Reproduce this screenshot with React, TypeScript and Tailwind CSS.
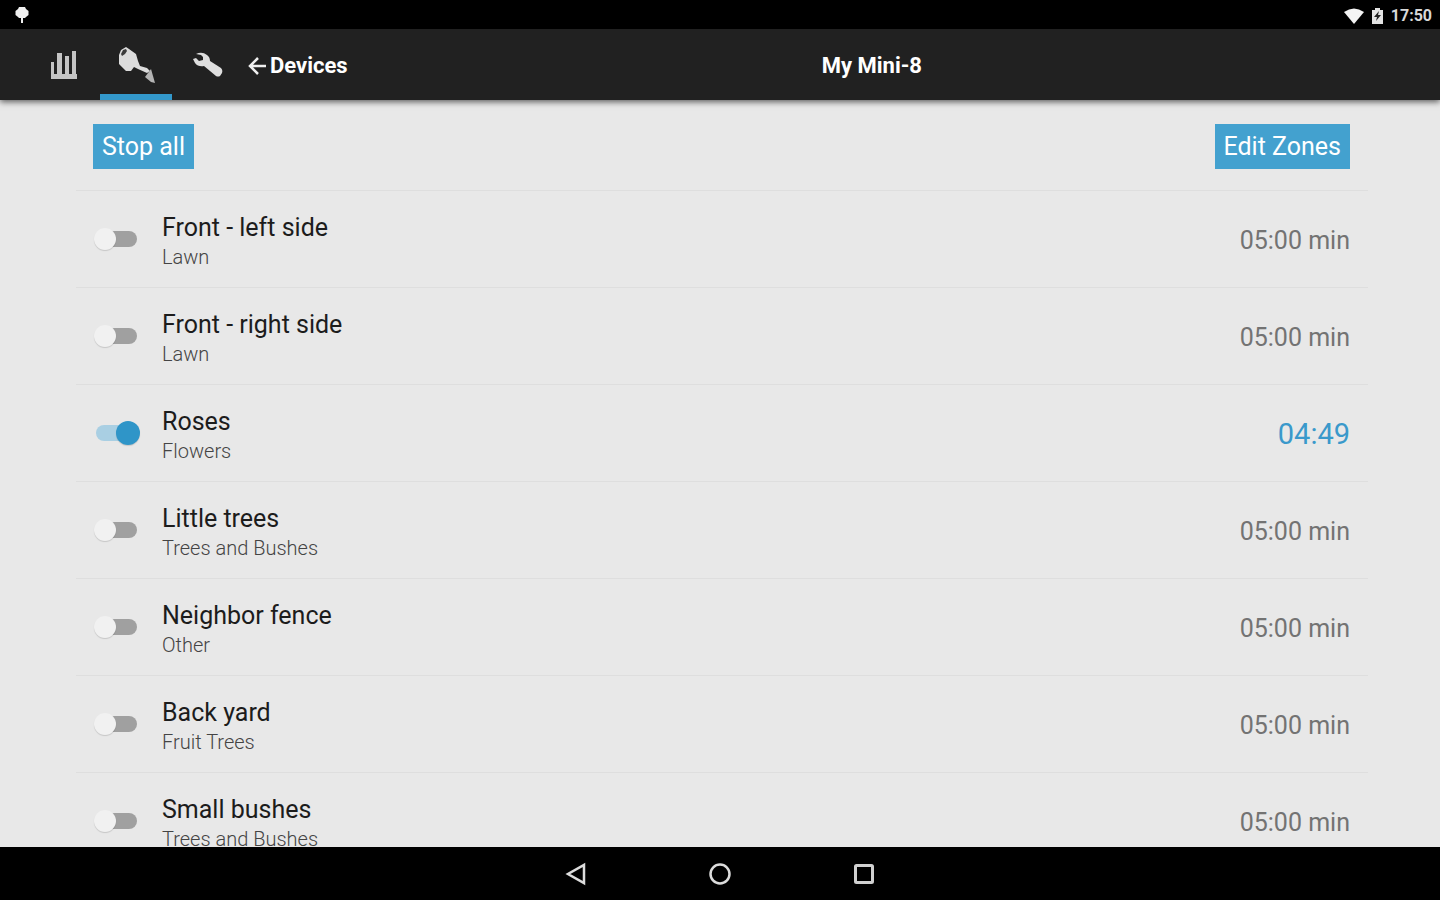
import React, { useState } from 'react';

interface Zone {
  id: number;
  name: string;
  type: string;
  remaining?: string;
}

const ZONES: Zone[] = [
  { id: 1, name: 'Front - left side', type: 'Lawn' },
  { id: 2, name: 'Front - right side', type: 'Lawn' },
  { id: 3, name: 'Roses', type: 'Flowers', remaining: '04:49' },
  { id: 4, name: 'Little trees', type: 'Trees and Bushes' },
  { id: 5, name: 'Neighbor fence', type: 'Other' },
  { id: 6, name: 'Back yard', type: 'Fruit Trees' },
  { id: 7, name: 'Small bushes', type: 'Trees and Bushes' },
];

const StatusBar: React.FC = () => (
  <div className="flex h-[29px] shrink-0 items-center justify-between bg-black pl-3.5 pr-2 text-[#d8d8d8]">
    <svg width="16" height="18" viewBox="0 0 16 18" fill="#f0f0f0">
      <path d="M5 1h6l1 2 2.500 2v4L12 11l-1 1H9v5H7v-5H5l-1-1-2.500-2V5L4 3z" />
    </svg>
    <div className="flex items-center pt-0.5">
      <svg width="20" height="16" viewBox="0 0 20 16" fill="#f4f4f4">
        <path d="M0 4Q10-3 20 4L10 16z" />
      </svg>
      <svg className="ml-2" width="11" height="16" viewBox="0 0 11 16">
        <path d="M3 0h5v2h3v14H0V2h3z" fill="#e4e4e4" />
        <path d="M7 3 2 9h3L4 13l5-6H6z" fill="#222" />
      </svg>
      <span className="ml-2 text-base font-bold leading-5">17:50</span>
    </div>
  </div>
);

const Header: React.FC = () => (
  <header className="relative z-10 flex h-[71px] shrink-0 items-stretch bg-[#212121] text-white shadow-[0_2px_6px_rgba(0,0,0,0.6)]">
    <nav className="flex items-stretch pl-7">
      <button aria-label="Statistics" className="flex w-[72px] items-center justify-center">
        <svg width="28" height="30" viewBox="0 0 28 30" fill="#c4c4c4">
          <path d="M1 12h3v13H1zM7 3h5v22H7zM15 6h4v19h-4zM22 1h4v24h-4z" />
          <path d="M1 24h26v5H1z" />
        </svg>
      </button>
      <button
        aria-label="Watering"
        className="flex w-[72px] items-center justify-center border-b-6 border-[#3398cb] pt-1"
      >
        <svg width="40" height="38" viewBox="0 0 40 38">
          <path
            d="M3 10 5 5 10 2 13 4 20 9 22 16 24 21 31 23 34 26 31 28 22 24 18 22 15 26 10 26 3 19z"
            fill="#dcdcdc"
          />
          <path d="M5 9 7 5 10 4 11 6 9 9 6 11z" fill="#3c3c3c" />
          <path d="M35 24 37 31 39 38 35 37 29 32 32 28z" fill="#b4b4b4" />
        </svg>
      </button>
      <button aria-label="Settings" className="flex w-[72px] items-center justify-center">
        <svg width="30" height="26" viewBox="0 0 30 26" fill="#dedede">
          <path d="M3 2Q9-1 14 3q3 2 3 6l11 7q2 2 1 5l-2 3q-2 1-4 0L11 14q-6 1-9-3L0 7l3-1 3 3 4-1V5L8 3z" />
        </svg>
      </button>
    </nav>
    <a href="#devices" className="flex items-center gap-1 pl-1 pt-0.5 text-[22px] font-bold leading-7">
      <svg width="18" height="20" viewBox="0 0 18 20" fill="none" stroke="#f0f0f0" strokeWidth="2.500">
        <path d="M10 2 2 10l8 8M2 10h16" />
      </svg>
      Devices
    </a>
    <h1 className="flex flex-1 items-center justify-center pr-11 pt-0.5 text-[22px] font-bold leading-7">
      My Mini-8
    </h1>
  </header>
);

const ZoneRow: React.FC<{ zone: Zone }> = ({ zone }) => {
  const [active, setActive] = useState(zone.remaining !== undefined);
  const inputId = `zone-${zone.id}`;

  return (
    <li className="flex h-[97px] shrink-0 items-center border-t border-[#dedede] pl-5 pr-[18px]">
      <input
        id={inputId}
        type="checkbox"
        role="switch"
        checked={active}
        onChange={(e) => setActive(e.target.checked)}
        className="relative h-4 w-[41px] shrink-0 appearance-none rounded-full bg-[#a0a0a0] before:absolute before:-left-0.5 before:-top-[3px] before:size-[22px] before:rounded-full before:bg-[#f1f1f1] before:shadow-[0_1px_1px_rgba(0,0,0,0.15)] checked:bg-[#a9cfe3] checked:before:left-5 checked:before:size-6 checked:before:-top-1 checked:before:bg-[#2f95c8]"
      />
      <label htmlFor={inputId} className="flex flex-1 flex-col pl-[25px] pt-1.5">
        <span className="text-[25px] leading-[30px] text-[#1c1c1c]">{zone.name}</span>
        <span className="text-[20px] font-light leading-7 text-[#444]">{zone.type}</span>
      </label>
      {active && zone.remaining ? (
        <span className="pt-0.5 text-[29px] leading-8 text-[#3a99cb]">{zone.remaining}</span>
      ) : (
        <span className="pt-1 text-[25px] leading-8 text-[#737373]">05:00 min</span>
      )}
    </li>
  );
};

const SystemNav: React.FC = () => (
  <nav className="flex h-[53px] shrink-0 items-center justify-center gap-[120px] bg-black">
    <button aria-label="Back">
      <svg width="24" height="24" viewBox="0 0 24 24" fill="none" stroke="#dcdcdc" strokeWidth="2.500">
        <path d="M20 3v18L4 12z" />
      </svg>
    </button>
    <button aria-label="Home">
      <svg width="24" height="24" viewBox="0 0 24 24" fill="none" stroke="#dcdcdc" strokeWidth="2.500">
        <circle cx="12" cy="12" r="9.500" />
      </svg>
    </button>
    <button aria-label="Recent apps">
      <svg width="24" height="24" viewBox="0 0 24 24" fill="none" stroke="#d0d0d0" strokeWidth="3">
        <rect x="3.500" y="3.500" width="17" height="17" rx="1" />
      </svg>
    </button>
  </nav>
);

const App: React.FC = () => {
  const actionClass = 'h-[45px] bg-[#43a1cf] px-[9px] pt-0.5 text-[25px] leading-8 text-white';

  return (
    <div className="flex h-screen flex-col overflow-hidden bg-[#e8e8e8] font-['Roboto',sans-serif]">
      <StatusBar />
      <Header />
      <main className="flex min-h-0 flex-1 flex-col overflow-hidden pl-[76px] pr-[72px]">
        <div className="flex h-[90px] shrink-0 items-center justify-between pl-[17px] pr-[18px] pt-0.5">
          <button className={actionClass}>Stop all</button>
          <button className={actionClass}>Edit Zones</button>
        </div>
        <ul className="flex flex-col">
          {ZONES.map((zone) => (
            <ZoneRow key={zone.id} zone={zone} />
          ))}
        </ul>
      </main>
      <SystemNav />
    </div>
  );
};

export default App;
